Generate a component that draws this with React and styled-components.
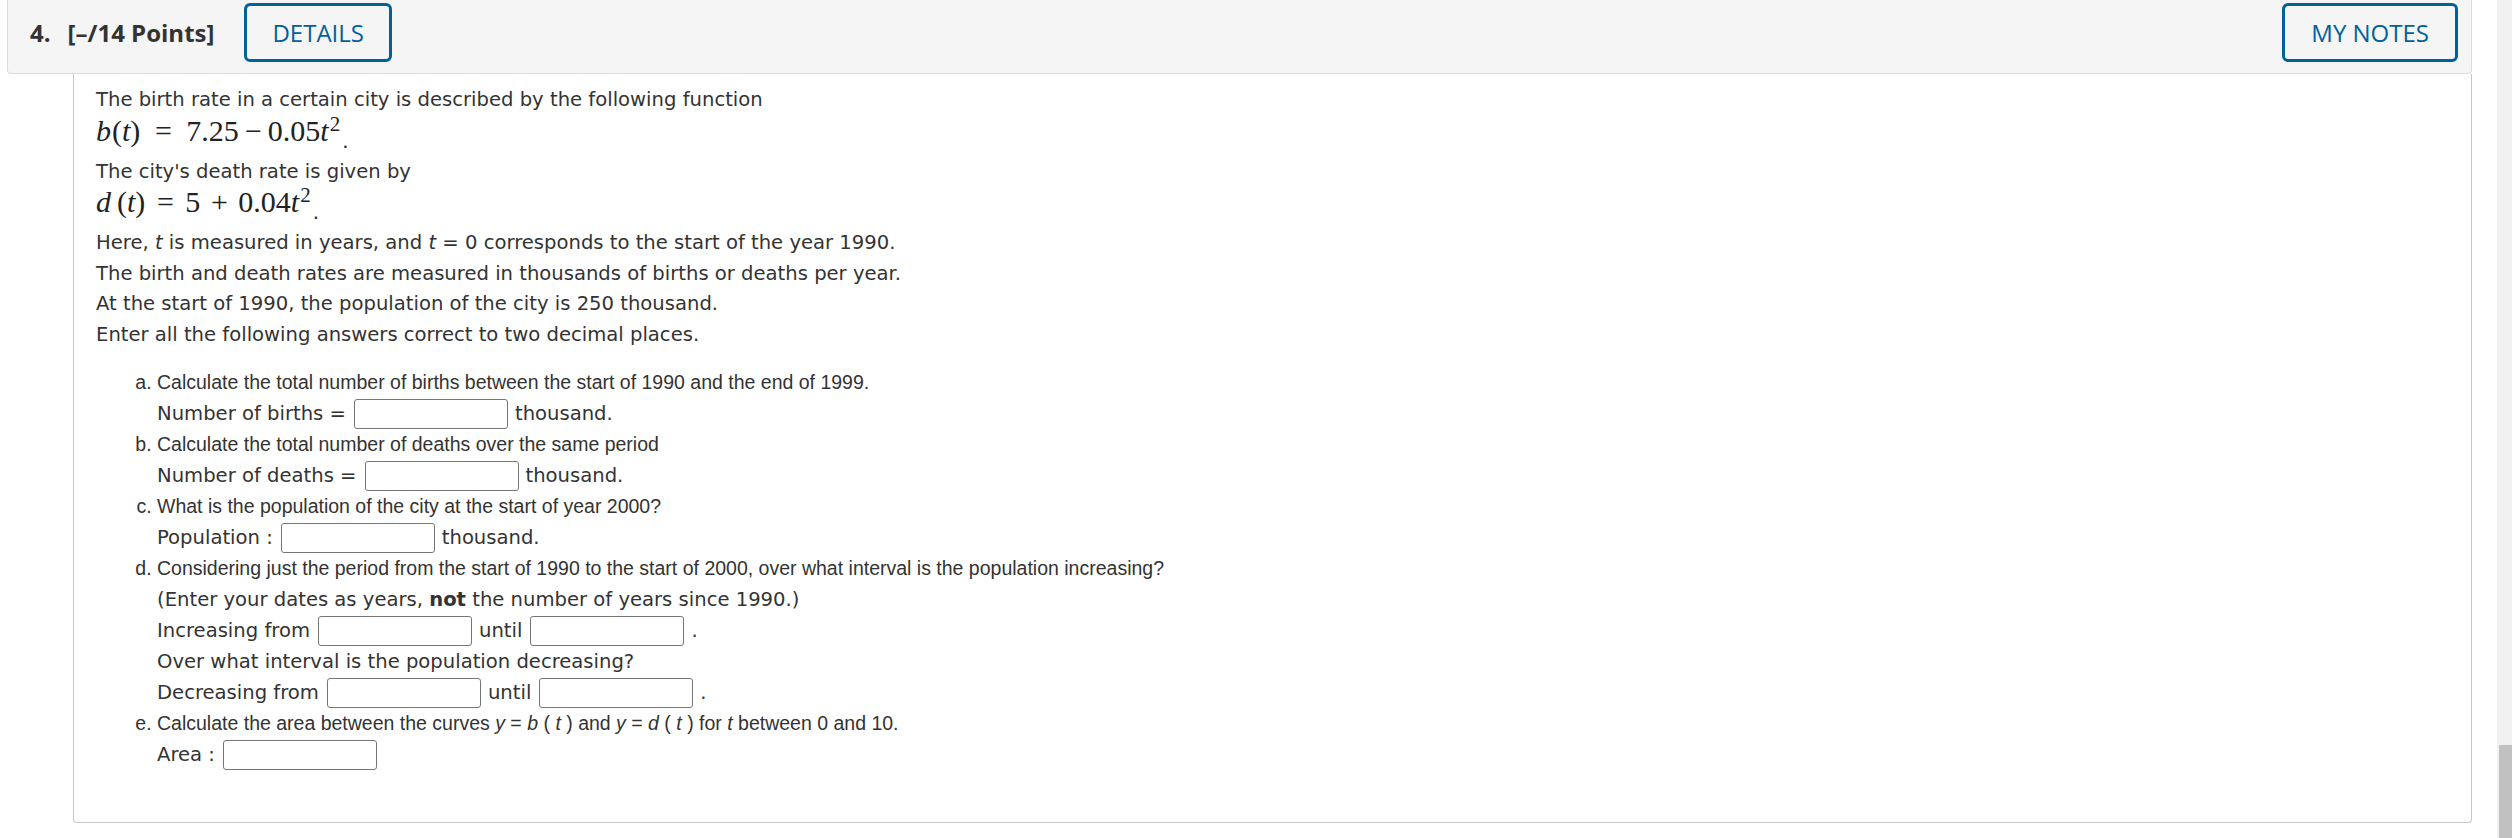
import React from "react";
import styled, { createGlobalStyle } from "styled-components";

const GlobalStyle = createGlobalStyle`
  html, body {
    margin: 0;
    padding: 0;
    background: #fff;
  }
`;

const TEXT_FONT = `"DejaVu Sans", Verdana, sans-serif`;
const ITEM_FONT = `"Liberation Sans", Arial, sans-serif`;
const MATH_FONT = `"Liberation Serif", "Times New Roman", serif`;

const Page = styled.div`
  display: flex;
  height: 838px;
  overflow: hidden;
  color: #333;
`;

const Main = styled.div`
  flex: 1;
  padding: 0 25px 0 7px;
`;

const QuestionHeader = styled.div`
  display: flex;
  align-items: center;
  justify-content: space-between;
  box-sizing: border-box;
  height: 74px;
  padding: 2px 13px 11px 22px;
  background: #f5f5f5;
  border: 1px solid #dcdcdc;
  border-top: none;
  border-radius: 0 0 4px 4px;
  font-family: "Open Sans", "Noto Sans", sans-serif;
`;

const HeaderLeft = styled.div`
  display: flex;
  align-items: center;
  gap: 30px;
`;

const QTitle = styled.div`
  font-size: 24px;
  font-weight: 700;
  color: #333;
  span {
    margin-right: 17px;
  }
`;

const OutlineButton = styled.button`
  box-sizing: border-box;
  height: 59px;
  padding: 0 ${(p) => p.$pad || 25}px;
  background: transparent;
  border: 3px solid #00629b;
  border-radius: 6px;
  color: #00629b;
  font-family: inherit;
  font-size: 24px;
  font-weight: 400;
  cursor: pointer;
`;

const Card = styled.div`
  margin-left: 66px;
  padding: 11px 22px 52px;
  border: 1px solid #c8c8c8;
  border-top: none;
  border-radius: 0 0 4px 4px;
  font-family: ${TEXT_FONT};
  font-size: 19.6px;
  color: #333;
`;

const Line = styled.div`
  height: 30.5px;
  line-height: 30.5px;
  white-space: nowrap;
`;

/* formula row: baseline sits high in the row, as MathJax output does */
const MathLine = styled.div`
  height: 29px;
  padding-bottom: 12px;
  line-height: 29px;
  font-family: ${MATH_FONT};
  font-size: 30px;
  color: #222;
  white-space: nowrap;
  i {
    font-style: italic;
  }
  sup {
    font-size: 21px;
    line-height: 0;
    vertical-align: 10px;
    margin-left: 1px;
  }
`;

const Op = styled.span`
  display: inline-block;
  width: ${(p) => p.$w}px;
  text-align: center;
`;

const Gap = styled.span`
  display: inline-block;
  width: ${(p) => p.$w}px;
`;

const MathDot = styled.span`
  font-family: ${TEXT_FONT};
  font-size: 20px;
  line-height: 0;
  vertical-align: -7px;
  margin-left: 2px;
`;

const AnswerList = styled.ol`
  list-style: lower-alpha;
  margin: 17px 0 0;
  padding-left: 61px;
  font-family: ${ITEM_FONT};
  font-size: 19.5px;
  color: #333;
`;

const ItemText = styled.div`
  height: 31px;
  line-height: 31px;
  white-space: nowrap;
`;

const SubLine = styled.div`
  display: flex;
  align-items: center;
  height: 31px;
  font-family: ${TEXT_FONT};
  font-size: 19.6px;
  white-space: pre;
`;

const Blank = styled.input`
  box-sizing: border-box;
  width: 154px;
  height: 30px;
  margin: 0 7px 0 8px;
  padding: 0 6px;
  border: 1px solid #767676;
  border-radius: 3px;
  font: inherit;
`;

const ScrollTrack = styled.div`
  display: flex;
  flex-direction: column;
  justify-content: flex-end;
  width: 15px;
  padding-left: 2px;
  box-sizing: border-box;
  background: #f1f1f1;
`;

const ScrollThumb = styled.div`
  height: 93px;
  background: #c1c1c1;
`;

export default function App() {
  return (
    <>
      <GlobalStyle />
      <Page>
        <Main>
          <QuestionHeader>
            <HeaderLeft>
              <QTitle>
                <span>4.</span>[–/14 Points]
              </QTitle>
              <OutlineButton>DETAILS</OutlineButton>
            </HeaderLeft>
            <OutlineButton $pad={26}>MY NOTES</OutlineButton>
          </QuestionHeader>

          <Card>
            <Line>The birth rate in a certain city is described by the following function</Line>
            <MathLine>
              <i>b</i>
              <Gap $w={1} />(<i>t</i>)<Op $w={46}>=</Op>7.25<Op $w={29}>−</Op>0.05<i>t</i>
              <sup>2</sup>
              <MathDot>.</MathDot>
            </MathLine>
            <Line>The city's death rate is given by</Line>
            <MathLine>
              <i>d</i>
              <Gap $w={6} />(<i>t</i>)<Op $w={40}>=</Op>5<Op $w={38}>+</Op>0.04<i>t</i>
              <sup>2</sup>
              <MathDot>.</MathDot>
            </MathLine>
            <Line>
              Here, <i>t</i> is measured in years, and <i>t</i> = 0 corresponds to the start of the year 1990.
            </Line>
            <Line>The birth and death rates are measured in thousands of births or deaths per year.</Line>
            <Line>At the start of 1990, the population of the city is 250 thousand.</Line>
            <Line>Enter all the following answers correct to two decimal places.</Line>

            <AnswerList>
              <li>
                <ItemText>Calculate the total number of births between the start of 1990 and the end of 1999.</ItemText>
                <SubLine>
                  Number of births =<Blank />thousand.
                </SubLine>
              </li>
              <li>
                <ItemText>Calculate the total number of deaths over the same period</ItemText>
                <SubLine>
                  Number of deaths =<Blank />thousand.
                </SubLine>
              </li>
              <li>
                <ItemText>What is the population of the city at the start of year 2000?</ItemText>
                <SubLine>
                  Population :<Blank />thousand.
                </SubLine>
              </li>
              <li>
                <ItemText>
                  Considering just the period from the start of 1990 to the start of 2000, over what interval is the
                  population increasing?
                </ItemText>
                <SubLine>
                  <span>
                    (Enter your dates as years, <b>not</b> the number of years since 1990.)
                  </span>
                </SubLine>
                <SubLine>
                  Increasing from<Blank />until<Blank />.
                </SubLine>
                <SubLine>Over what interval is the population decreasing?</SubLine>
                <SubLine>
                  Decreasing from<Blank />until<Blank />.
                </SubLine>
              </li>
              <li>
                <ItemText>
                  Calculate the area between the curves <i>y</i> = <i>b</i> ( <i>t</i> ) and <i>y</i> = <i>d</i> ({" "}
                  <i>t</i> ) for <i>t</i> between 0 and 10.
                </ItemText>
                <SubLine>
                  Area :<Blank />
                </SubLine>
              </li>
            </AnswerList>
          </Card>
        </Main>
        <ScrollTrack>
          <ScrollThumb />
        </ScrollTrack>
      </Page>
    </>
  );
}
